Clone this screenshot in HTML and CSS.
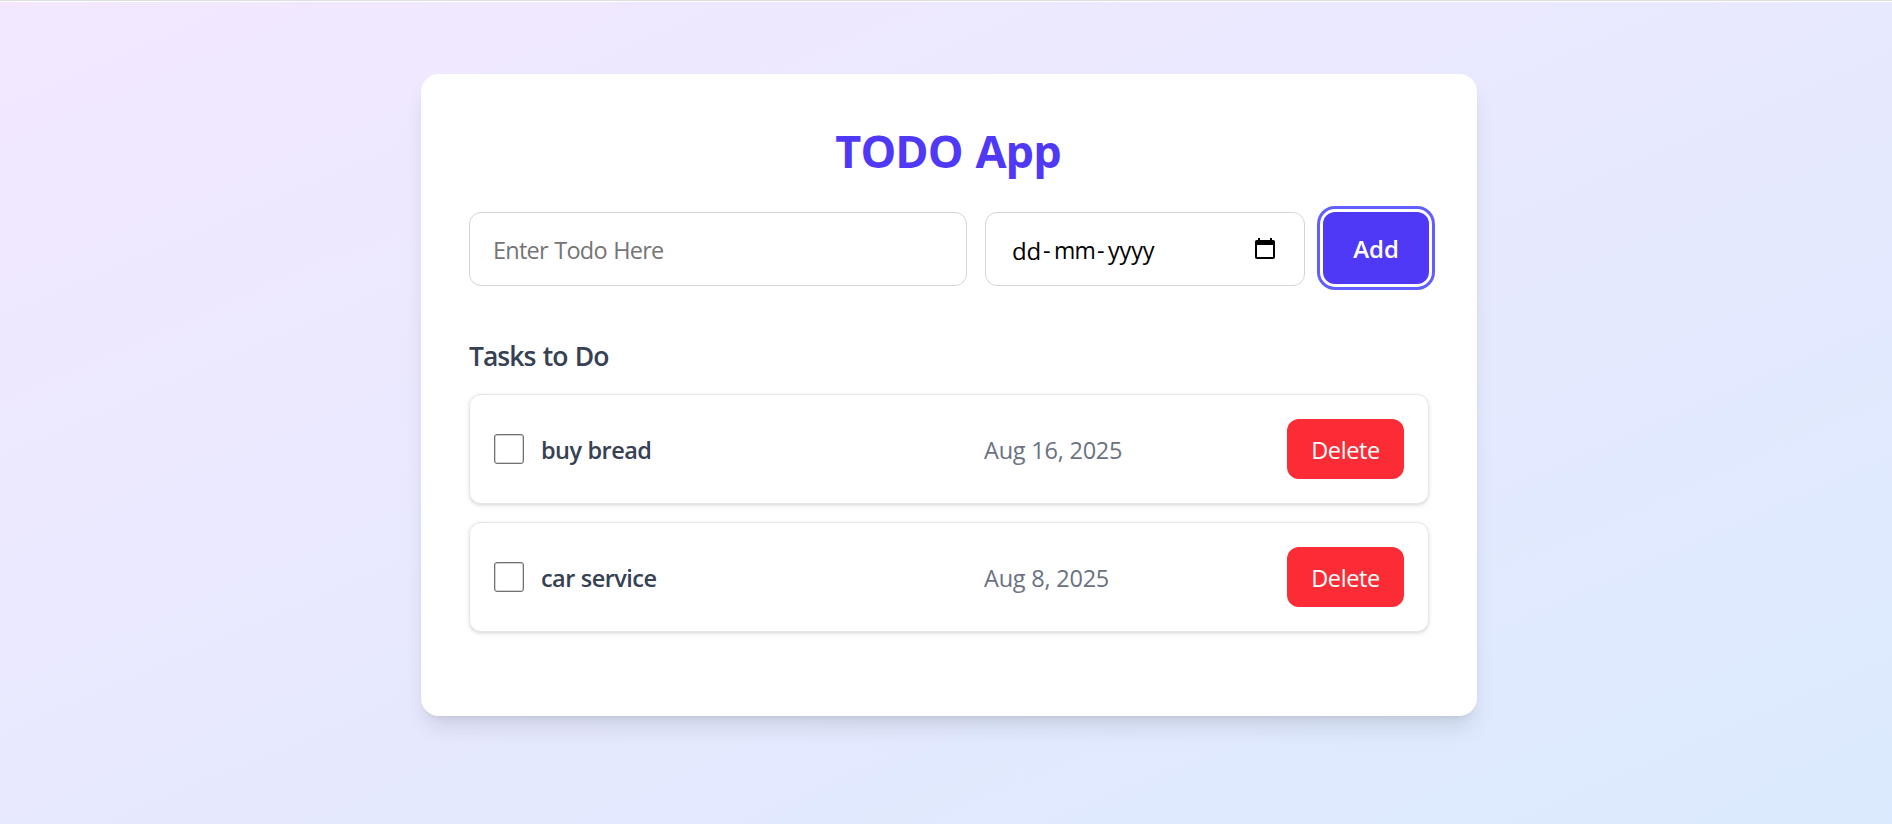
FILE: index.html
```html
<!DOCTYPE html>
<html lang="en">
<head>
<meta charset="utf-8">
<title>TODO App</title>
<link rel="stylesheet" href="styles.css">
</head>
<body>
<main class="page">
  <section class="card">
    <h1 class="title">TODO App</h1>
    <form class="entry">
      <div class="field field-text"><input class="todo-input" type="text" placeholder="Enter Todo Here" aria-label="Todo"></div>
      <div class="field field-date">
        <span class="date"><span class="dd">dd</span><span class="dash">-</span><span class="mm">mm</span><span class="dash">-</span><span class="yyyy">yyyy</span></span>
        <svg class="calendar" width="20" height="22" viewBox="0 0 20 22" aria-hidden="true">
          <path d="M3 0h2v2h10V0h2v2h1.200A1.800 1.800 0 0 1 20 3.800v15.400a1.800 1.800 0 0 1-1.800 1.800H1.800A1.800 1.800 0 0 1 0 19.200V3.800A1.800 1.800 0 0 1 1.800 2H3zM2 7v12h16V7z" fill="#000" fill-rule="evenodd"/>
        </svg>
      </div>
      <button class="add" type="button">Add</button>
    </form>
    <h2 class="subtitle">Tasks to Do</h2>
    <ul class="tasks">
      <li class="task">
        <span class="check" role="checkbox" aria-checked="false"></span>
        <span class="name">buy bread</span>
        <span class="due">Aug 16, 2025</span>
        <button class="delete" type="button">Delete</button>
      </li>
      <li class="task">
        <span class="check" role="checkbox" aria-checked="false"></span>
        <span class="name">car service</span>
        <span class="due">Aug 8, 2025</span>
        <button class="delete" type="button">Delete</button>
      </li>
    </ul>
  </section>
</main>
</body>
</html>
```
FILE: styles.css
```css
* { box-sizing: border-box; margin: 0; padding: 0; }
body {
  font-family: "Open Sans", "Noto Sans", sans-serif;
  font-size: 23.5px;
  background: #fff;
  border-top: 1px solid #dedede;
  padding-top: 1px;
  height: 824px;
  overflow: hidden;
}
.page {
  height: 822px;
  padding-top: 72px;
  background: linear-gradient(to bottom right in oklab, #f3e8ff, #dbeafe);
}
.card {
  width: 1056px;
  height: 642px;
  margin-left: 421px;
  padding: 48px;
  background: #fff;
  border-radius: 18px;
  box-shadow: 0 15px 22.5px -4.5px rgb(0 0 0 / .1), 0 6px 9px -6px rgb(0 0 0 / .1);
}
.title {
  margin-bottom: 32px;
  padding-right: 2px;
  font-size: 45px;
  line-height: 58px;
  font-weight: 700;
  letter-spacing: -.9px;
  word-spacing: 2px;
  text-align: center;
  color: #4f39f6;
}
.entry { display: flex; gap: 18px; align-items: flex-start; }
.field {
  display: flex;
  align-items: center;
  height: 74px;
  border: 1px solid #d1d5dc;
  border-radius: 12px;
}
.field-text { width: 498px; padding: 2px 23px 0; }
.todo-input {
  width: 100%;
  border: 0;
  outline: 0;
  background: transparent;
  font: inherit;
  letter-spacing: -.75px;
  word-spacing: 1px;
}
.todo-input::placeholder { color: #757575; opacity: 1; }
.field-date { width: 320px; padding: 0 29px 0 26px; justify-content: space-between; }
.date { display: flex; padding-top: 2px; color: #000; }
.dd { width: 31px; font-size: 24px; letter-spacing: -.3px; }
.dash { width: 11px; }
.mm { width: 43px; font-size: 23px; letter-spacing: -.8px; }
.yyyy { letter-spacing: -.2px; }
.add {
  width: 106px;
  height: 72px;
  padding-top: 1px;
  border: 0;
  border-radius: 12px;
  background: #4f39f6;
  color: #fff;
  font: 600 24px "Open Sans", "Noto Sans", sans-serif;
  box-shadow: 0 0 0 3px #fff, 0 0 0 6px #615fff;
}
.subtitle {
  margin: 50px 0 18px;
  font-size: 26.5px;
  line-height: 40px;
  font-weight: 600;
  letter-spacing: -1px;
  word-spacing: 1.5px;
  color: #364153;
}
.tasks { display: grid; gap: 18px; list-style: none; }
.task {
  display: grid;
  grid-template-columns: 47px 443px 303px 117px;
  align-items: center;
  height: 110px;
  padding: 0 24px;
  border: 1px solid #e5e7eb;
  border-radius: 12px;
  background: #fff;
  box-shadow: 0 1.5px 4.5px rgb(0 0 0 / .1), 0 1.5px 3px -1.5px rgb(0 0 0 / .1);
}
.check { width: 30px; height: 30px; border: 1px solid #707070; border-radius: 3px; box-shadow: inset 0 0 0 .5px #a8a8a8; }
.name { padding-top: 2px; font-weight: 600; letter-spacing: -.55px; word-spacing: .5px; color: #364153; }
.due { padding-top: 2px; letter-spacing: -.22px; color: #6a7282; }
.delete {
  height: 60px;
  padding-top: 2px;
  border: 0;
  border-radius: 12px;
  background: #fb2c36;
  color: #fff;
  font: inherit;
  letter-spacing: -.4px;
}
```
